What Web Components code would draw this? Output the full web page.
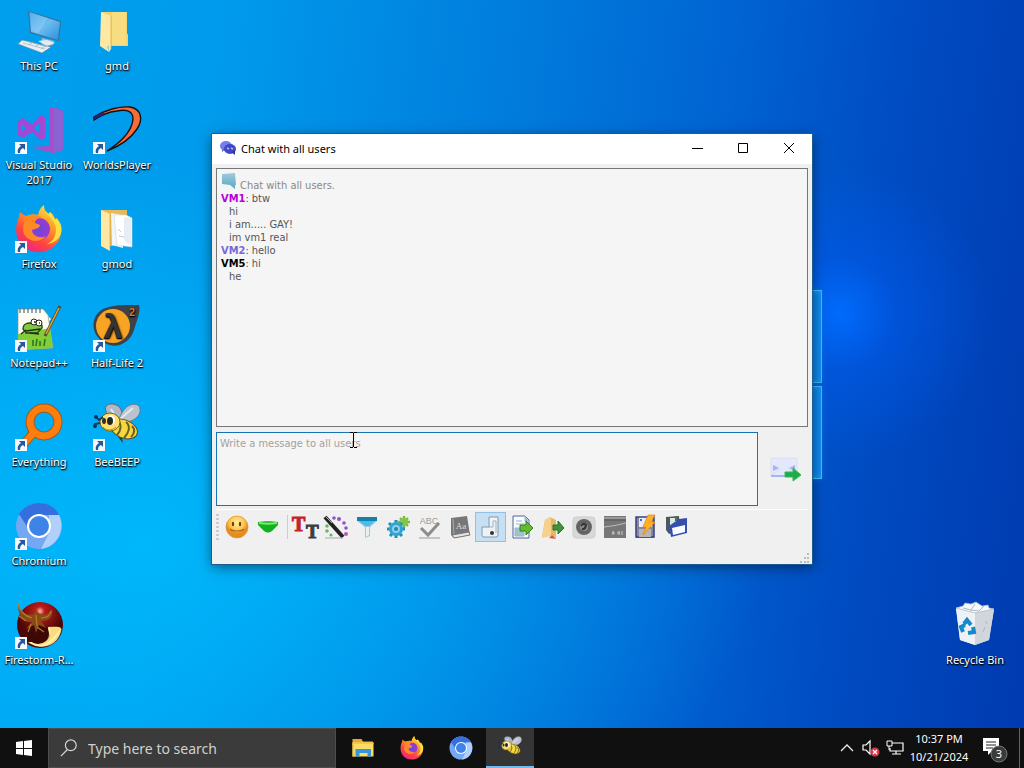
<!DOCTYPE html>
<html lang="en">
<head>
	<meta charset="utf-8">
	<title>Desktop</title>
	<meta name="viewport" content="width=device-width">
</head>
<style type="text/css">
html, body {
	height:100%;
}
body {
	margin:0;
	overflow:hidden;
	font-family:'Noto Sans', 'Open Sans', sans-serif;
	font-size:12px;
}
</style>
<body>

<desktop-screen>
	<desktop-icon icon="pc">This PC</desktop-icon>
	<desktop-icon icon="vs" shortcut>Visual Studio 2017</desktop-icon>
	<desktop-icon icon="firefox" shortcut>Firefox</desktop-icon>
	<desktop-icon icon="notepad" shortcut>Notepad++</desktop-icon>
	<desktop-icon icon="everything" shortcut>Everything</desktop-icon>
	<desktop-icon icon="chromium" shortcut>Chromium</desktop-icon>
	<desktop-icon icon="firestorm" shortcut>Firestorm-R...</desktop-icon>
	<desktop-icon icon="folder">gmd</desktop-icon>
	<desktop-icon icon="worlds" shortcut>WorldsPlayer</desktop-icon>
	<desktop-icon icon="folderfull">gmod</desktop-icon>
	<desktop-icon icon="halflife" shortcut>Half-Life 2</desktop-icon>
	<desktop-icon icon="bee" shortcut>BeeBEEP</desktop-icon>
	<desktop-icon slot="corner" icon="bin">Recycle Bin</desktop-icon>

	<app-window slot="window" icon="chat">
		<span slot="title">Chat with all users</span>
		<chat-log>
			<chat-line icon="bubble" muted>Chat with all users.</chat-line>
			<chat-line from="VM1" color="#b800d8">btw</chat-line>
			<chat-line indent>hi</chat-line>
			<chat-line indent>i am..... GAY!</chat-line>
			<chat-line indent>im vm1 real</chat-line>
			<chat-line from="VM2" color="#7b68d8">hello</chat-line>
			<chat-line from="VM5" color="#000">hi</chat-line>
			<chat-line indent>he</chat-line>
		</chat-log>
		<message-box placeholder="Write a message to all users"></message-box>
		<tool-bar>
			<tool-button icon="smile" name="Emoticons"></tool-button>
			<tool-button icon="down" name="More emoticons"></tool-button>
			<tool-separator></tool-separator>
			<tool-button icon="font" name="Font"></tool-button>
			<tool-button icon="wand" name="Font color"></tool-button>
			<tool-button icon="filter" name="Filter"></tool-button>
			<tool-button icon="gear" name="Options"></tool-button>
			<tool-button icon="spell" name="Spell check"></tool-button>
			<tool-button icon="dict" name="Dictionary"></tool-button>
			<tool-button icon="note" name="Sound" active></tool-button>
			<tool-button icon="file" name="Send file"></tool-button>
			<tool-button icon="folderout" name="Send folder"></tool-button>
			<tool-button icon="voice" name="Voice message"></tool-button>
			<tool-button icon="shot" name="Screenshot"></tool-button>
			<tool-button icon="buzz" name="Buzz"></tool-button>
			<tool-button icon="save" name="Save chat"></tool-button>
		</tool-bar>
	</app-window>

	<task-bar slot="taskbar">
		<task-button icon="explorer" name="File Explorer"></task-button>
		<task-button icon="firefox" name="Firefox"></task-button>
		<task-button icon="chromium" name="Chromium"></task-button>
		<task-button icon="bee" name="BeeBEEP" active></task-button>
	</task-bar>
</desktop-screen>

<script type="text/javascript">

	// every drawing, as [viewBox size, markup]
	const icons = {
		pc: [48, `<defs><linearGradient id="g" x1="0" y1="0" x2="1" y2="1"><stop offset="0" stop-color="#2f9be8"/><stop offset=".5" stop-color="#6cbcf0"/><stop offset="1" stop-color="#2b8fdd"/></linearGradient></defs>
			<path d="M27 31l12 3-1 4-8 1-4-3z" fill="#a9bac6"/><path d="M23 34l9-1 8 3-8 3z" fill="#e3ebf0"/>
			<path d="M13 4l33 10-2 20-29-8z" fill="#3a6d92"/><path d="M14 5l31 10-2 18-27-8z" fill="url(#g)"/><path d="M15 5l18 6-10 15-7-2z" fill="#fff" opacity=".18"/>
			<path d="M7 33l29 7-9 6-24-9z" fill="#e9eff3" stroke="#65859a" stroke-width=".6"/><path d="M8 36l22 6M11 34l21 6M14 38l4-3M20 40l4-3M26 42l4-3" stroke="#9cb0bd" fill="none" stroke-width=".7"/>`],
		folder: [48, `<path d="M8 5h26v21l1 2v11H15z" fill="#f4d26c"/><path d="M19 5h14v33H19z" fill="#f8dc80"/><path d="M8 5l10 4v33l-2 3-9-6z" fill="#ffe9a2"/><path d="M18 9v33" stroke="#d9ad42" stroke-width=".8"/><path d="M14 40l2 5v-7z" fill="#7fd3ee"/>`],
		folderfull: [48, `<path d="M8 5h26v36H15z" fill="#e6bb57"/><path d="M18 8l11 2 1 33-11-3z" fill="#f2f5f7"/><path d="M21 10h12l6 3v29l-15-2z" fill="#fff" stroke="#cdd5dc" stroke-width=".6"/><path d="M31 12l7 1v28l-7-6z" fill="#e7edf3"/><path d="M25 24l3 3m-2 4l5 1" stroke="#b9c9da"/><path d="M8 5l9 4v37l-9-5z" fill="#ffe8a5"/><path d="M17 9v36" stroke="#d4a33c" stroke-width=".7"/>`],
		vs: [48, `<path d="M35 2l4-1 9 4v39l-10 3-23-6 20-1z" fill="#a64fc8"/><path d="M39 1l9 4v39l-9 3z" fill="#8b62d3"/><path fill-rule="evenodd" d="M3 15l5-3 9 7 8-10 5 2v21l-5 2-8-8-9 6-5-3zM6 18v8l5-4zm18-1l-5 5 5 5z" fill="#a348d5"/>`],
		worlds: [48, `<path d="M1 11C12 4 26 0 37 1c12 2 13 13 7 22-6 9-17 17-30 22 14-9 22-17 25-27C43 5 34 3 24 5c-9 1-16 4-23 9z" fill="#f66d36" stroke="#150f18" stroke-width="1.4"/><path d="M1 12l10-5" stroke="#29206c" stroke-width="3"/>`],
		firefox: [48, `<defs><linearGradient id="g" x1=".8" y1="0" x2=".2" y2="1"><stop offset="0" stop-color="#ffee45"/><stop offset=".35" stop-color="#ff9b27"/><stop offset=".7" stop-color="#ff4146"/><stop offset="1" stop-color="#e9208c"/></linearGradient><radialGradient id="p"><stop offset="0" stop-color="#6b45dd"/><stop offset="1" stop-color="#9a3bd0"/></radialGradient></defs>
			<path d="M4 12l1-5c2 2 4 3 6 4 5-2 8-2 12-1 1-5 3-8 6-10 0 5 2 7 5 9l1-2c3 2 4 4 5 7l2-1c7 13 4 24-5 30-10 7-25 5-32-5C0 30 0 20 4 12z" fill="url(#g)"/>
			<path d="M27 2c4 8 14 12 14 23 0 7-4 12-9 14 16-2 18-18 10-25l-2 1-5-8-1 2c-3-2-6-4-7-7z" fill="#ffdf3e"/><circle cx="24" cy="24" r="11" fill="url(#p)"/><path d="M10 12c5-3 12-3 17 1-6 0-7 3-7 5l5 2c0 3-5 4-8 5 0 6 8 9 14 6-7 9-23 5-23-7z" fill="#ff8a25"/>`],
		notepad: [48, `<path d="M3 6h24l9 9-3 4 3 22-29 1z" fill="#fcfdf4"/><path d="M3 5h25l5 6 5 33-35 2z" fill="#fcfdf4" stroke="#8b9485" stroke-width=".7"/><path d="M3 30l32-6 3 20-35 2z" fill="#81ce38"/><path d="M5 4v5m4-5v5m4-5v5m4-5v5m4-5v5m4-5v5" stroke="#526f83" stroke-width="1.2"/>
			<path d="M8 25c0-6 6-7 10-5 4-5 10-1 9 4l-5 5H11z" fill="#82c941" stroke="#263b15" stroke-width="1.3"/><circle cx="19" cy="18" r="3" fill="#fff" stroke="#1f2915"/><circle cx="24" cy="19" r="3" fill="#fff" stroke="#1f2915"/><path d="M19 18h2m3 1h1M11 27l14-2M6 30l5-4m4 3l9 1" stroke="#1e3214" stroke-width="1.5"/><path d="M18 42v-6m3 6l1-7m3 7v-5m4 5l1-7" stroke="#2b7720" stroke-width="1.6"/><path d="M45 2l-15 30" stroke="#584936" stroke-width="3"/><path d="M44 4L31 30" stroke="#d9a93a" stroke-width="1.6"/>`],
		halflife: [48, `<path d="M10 5C20 0 35 1 46 1c2 6-2 15-5 25-4 13-18 20-29 13C-3 31-3 12 10 5z" fill="#3d4148"/><circle cx="20" cy="22" r="17" fill="#f7a323"/><text x="20" y="34" text-anchor="middle" font-family="Liberation Sans" font-weight="bold" font-size="34" fill="#343434">λ</text><text x="39" y="12" text-anchor="middle" font-family="Liberation Sans" font-size="10" font-weight="bold" fill="#e7752a">2</text>`],
		everything: [48, `<circle cx="29" cy="19" r="14" fill="none" stroke="#9a5b22" stroke-width="9"/><path d="M18 30L9 41" stroke="#9a5b22" stroke-width="9"/><circle cx="29" cy="19" r="14" fill="none" stroke="#ff7d0c" stroke-width="7"/><path d="M20 28L8 42" stroke="#ff7d0c" stroke-width="7"/>`],
		bee: [48, `<path d="M20 17C10 9 10 0 20 1c8 1 11 9 8 17z" fill="#aeb8c8" stroke="#616878"/><path d="M26 17C29 4 40-2 46 3c4 8-4 16-15 16z" fill="#bcc3d0" stroke="#727a88"/><path d="M18 6l6 10m3 0L40 5" stroke="#e3e9f2" stroke-width="2"/>
			<ellipse cx="31" cy="26" rx="14" ry="9" transform="rotate(22 31 26)" fill="#f6d740" stroke="#5b491e"/><path d="M25 18c4 3 3 10-1 14m9-13c5 4 3 11-2 16m8-12c4 4 2 8-1 11" fill="none" stroke="#6b5f1f" stroke-width="2"/><path d="M29 35l1 5-5-6z" fill="#463724"/>
			<ellipse cx="17" cy="19" rx="10" ry="9" fill="#ffe16a" stroke="#756320"/><path d="M10 24c3 4 9 4 13 0" fill="none" stroke="#b98c25"/><ellipse cx="18" cy="17" rx="4" ry="5" fill="#fff"/><ellipse cx="17" cy="18" rx="3" ry="4" fill="#252525"/><ellipse cx="11" cy="18" rx="2" ry="3" fill="#303030"/><path d="M10 14l-4 3-3-3m4 6l-5 1v4" stroke="#15355d" stroke-width="1.8" fill="none"/><circle cx="3" cy="14" r="2" fill="#15355d"/><circle cx="2" cy="23" r="2" fill="#15355d"/>`],
		chromium: [48, `<circle cx="24" cy="24" r="23" fill="#75a8f2"/><path d="M4 12C10 3 19 1 24 1c10 0 17 5 20 12H24L13 26z" fill="#356fde"/><path d="M44 13c7 15-2 32-18 34l8-16V13z" fill="#b1cffb"/><circle cx="24" cy="24" r="12" fill="#fff"/><circle cx="24" cy="24" r="10" fill="#3d83e8"/>`],
		firestorm: [48, `<defs><radialGradient id="g" cx=".5" cy=".2"><stop offset="0" stop-color="#ffc0a8"/><stop offset=".2" stop-color="#bd1b19"/><stop offset="1" stop-color="#4e0708"/></radialGradient></defs><circle cx="25" cy="24" r="23" fill="url(#g)"/><path d="M16 42c16 2 21-5 18-16 10-1 14 0 12 4-3 14-18 20-30 12z" fill="#f9dd7c"/><path d="M34 26c2 13-6 15-18 16 15 9 24-6 29-12" fill="none" stroke="#fff1ae" stroke-width="2"/><ellipse cx="23" cy="33" rx="11" ry="10" fill="#3d0805"/>
			<path d="M3 3c0 12 5 19 14 18l-6 7 8-4 2 8 3-8 7 3-5-7c10 0 12-6 11-12-4 7-10 6-14 4l-2-5-2 6C10 15 5 12 3 3z" fill="#8a4a16"/><path d="M3 3c2 8 7 12 14 14m4-3l1 11m4-8c6 0 9-2 10-7M4 15l7 5m5 3l-3 8m9-5l7 5" stroke="#b97a2c" fill="none" stroke-width="1.2"/>`],
		bin: [48, `<path d="M5 7l18-3 20 4-5 31-14 5-15-5z" fill="#dde4ea"/><path d="M5 7l19 5v32L9 39z" fill="#eff2f4"/><path d="M24 12l19-4-5 31-14 5z" fill="#d0d6db"/><path d="M5 7l7-2 2-3 6 1 5-2 6 4 6-1 1 3 5 1-19 4z" fill="#f7f8fa" stroke="#a7b5c2" stroke-width=".7"/><path d="M12 7l8 2 4-6m-5 6l9 1 5-5" fill="none" stroke="#a9bac7"/><path d="M13 23l3-4 4 5m2 2l1 5-6 1m-5-1l-2-5 4-2" fill="none" stroke="#1589cc" stroke-width="4"/><path d="M35 20l1 3m-2 3l-2 5" stroke="#afbac4"/>`],
		chat: [16, `<ellipse cx="6" cy="6" rx="6" ry="5" fill="#7480ea"/><path d="M2 8v4l4-3" fill="#6973d8"/><ellipse cx="10" cy="9" rx="6" ry="5" fill="#4047c7"/><path d="M11 12l4 3v-5" fill="#3035aa"/><path d="M7 8l2 1m2-1l2 1" stroke="#aebaff" stroke-width="1.5"/>`],
		bubble: [16, `<defs><linearGradient id="g" x2="0" y2="1"><stop stop-color="#9fcbda"/><stop offset="1" stop-color="#58a7c3"/></linearGradient></defs><path d="M1 1l13-1 1 12h-1v4l-5-4-8-1z" fill="url(#g)"/>`],
		smile: [24, `<defs><radialGradient id="g" cy=".3"><stop offset="0" stop-color="#fff29e"/><stop offset=".7" stop-color="#ffc147"/><stop offset="1" stop-color="#e78b20"/></radialGradient></defs><circle cx="12" cy="12" r="11" fill="url(#g)" stroke="#d89433" stroke-width=".7"/><ellipse cx="8" cy="9" rx="1.2" ry="2.3" fill="#6d3e16"/><ellipse cx="15" cy="9" rx="1.2" ry="2.3" fill="#6d3e16"/><path d="M5 14q2 2 7 2t7-2" stroke="#a8682a" fill="none" stroke-width="1.2"/>`],
		down: [24, `<path d="M2 7c6-1 14-1 20 0v3l-6 6q-4 3-8 0l-6-6z" fill="#10b020"/><path d="M3 8c6 1 12 1 18 0" stroke="#75ec68" stroke-width="2" fill="none"/>`],
		font: [24, `<text x="-1" y="16" font-family="Liberation Serif" font-weight="bold" font-size="20" fill="#c4222c" stroke="#c4222c">T</text><text x="13" y="23" font-family="Liberation Serif" font-weight="bold" font-size="19" fill="#3d3d40" stroke="#3d3d40">T</text>`],
		wand: [24, `<path d="M1 2l18 20" stroke="#222" stroke-width="4"/><path d="M2 2l6 6" stroke="#aaa"/><path d="M1 23h18" stroke="#aaa"/><g fill="#8855cc"><circle cx="10" cy="3" r="1.8"/><circle cx="15" cy="4" r="2"/><circle cx="20" cy="8" r="1.800"/><circle cx="22" cy="13" r="1.800"/><circle cx="22" cy="19" r="2" fill="#bf55b5"/></g><g fill="#69b36b"><circle cx="3" cy="11" r="1.8"/><circle cx="3" cy="16" r="1.800"/><circle cx="7" cy="20" r="1.600"/></g>`],
		filter: [24, `<path d="M2 2h20v4l-7 6v9l-5 2V12L2 6z" fill="#9bc9de"/><path d="M2 2h20v4H2z" fill="#157fae"/><path d="M4 6h16l-6 5h-4z" fill="#48bde5"/><path d="M11 12h3v8l-3 2z" fill="#e7f1f4"/>`],
		gear: [24, `<path d="M18 1v12M12 7h12M14 3l8 8M22 3l-8 8" stroke="#77b83c" stroke-width="2.400"/><circle cx="18" cy="7" r="4" fill="#84c64b"/><path d="M10 5v18M1 14h18M3 8l13 13M16 8L4 21" stroke="#238dbb" stroke-width="3"/><circle cx="10" cy="14" r="7" fill="#31a4d1"/><circle cx="10" cy="14" r="4" fill="#8fd0e8"/><circle cx="10" cy="14" r="2" fill="#2585ae"/>`],
		spell: [24, `<text x="12" y="9" text-anchor="middle" font-family="Liberation Sans" font-size="9" fill="#999">ABC</text><path d="M4 13l7 7 11-12" fill="none" stroke="#8c8c8c" stroke-width="3"/><path d="M2 23h21" stroke="#999"/>`],
		dict: [24, `<path d="M3 3l16-2 3 19-16 3-3-3z" fill="#777"/><path d="M4 20l17-3 1 3-16 3z" fill="#e4e4e4" stroke="#777"/><path d="M5 4l1 15" stroke="#aaa"/><text x="13" y="14" text-anchor="middle" font-family="Liberation Serif" font-size="9" fill="#ddd">Aa</text>`],
		note: [24, `<path d="M10 2h9v18q0 2-2 2H5q-2 0-2-2v-8h7z" fill="#edf2f6" stroke="#8398ae"/><path d="M9 12h5V6h3v12" fill="none" stroke="#a1afbc"/><ellipse cx="13" cy="18" rx="2" ry="2" fill="#333"/>`],
		file: [24, `<path d="M3 1h12l4 4v18H3z" fill="#f8fbff" stroke="#51659a"/><path d="M15 1v5h4M6 6h6M6 9h9M5 13h9v8H5z" fill="#9fc3cd" stroke="#9bb5ce"/><path d="M10 10h6V6l7 7-7 7v-4h-6z" fill="#65bb2b" stroke="#317f25"/>`],
		folderout: [24, `<path d="M1 22l3-17 5-3 6 3v18l-6-3z" fill="#e6b766"/><path d="M4 5l6-3v19l-9 2z" fill="#f5d18d"/><path d="M12 10h5V6l6 7-6 6v-4h-5z" fill="#3d9534" stroke="#2b7229"/><path d="M8 23l3-3 4 4" fill="#cb5c44"/>`],
		voice: [24, `<rect x="1" y="2" width="22" height="21" rx="3" fill="#d8d8d8" stroke="#ccc"/><circle cx="12" cy="12" r="8" fill="#666"/><circle cx="12" cy="12" r="5" fill="#888" stroke="#555"/><path d="M9 11q3-4 5-1-1 5-4 4" fill="none" stroke="#333" stroke-width="2"/>`],
		shot: [24, `<path d="M1 1h22v22H1z" fill="#777"/><path d="M1 3h22M1 12q11-1 22-4" stroke="#bbb" fill="none"/><path d="M1 5h22" stroke="#555"/><path d="M9 18h3m2 0h3m2-2v4m-9-4v4m6-4v4" stroke="#ccc"/>`],
		buzz: [24, `<path d="M2 2h18v21H2z" fill="#8a8796"/><path d="M5 2h13v10H5z" fill="#e9edfb"/><path d="M2 2h18v20H2z" fill="none" stroke="#36408c" stroke-width="1.5"/><path d="M5 14h12v8H5z" fill="#b9b3b3"/><path d="M14 0h7l-4 7h4L9 20l3-8H9z" fill="#ffb323" stroke="#eb7c18" stroke-width=".7"/><path d="M6 4h2v2H6z" fill="#4a66ce"/>`],
		save: [24, `<path d="M1 2l13-1 1 14-11 4-3-4z" fill="#4d5666"/><path d="M5 3h7v7H5z" fill="#dce9dc"/><path d="M10 1h2v5h-2z" fill="#527153"/><path d="M14 4l8-1v15L6 22 4 11z" fill="#354daf"/><path d="M7 13l13-3v7L8 20z" fill="#f8fbff"/>`],
		send: [32, `<path d="M2 5h26v18H2z" fill="#e3e8fb" stroke="#d8def8"/><path d="M2 23l9-8m17 8l-9-8" fill="none" stroke="#d3daf6"/><path d="M4 12l6 3-6 3zm22 0l-6 3 6 3zM2 22h14v2H2z" fill="#a7b2ee"/><path d="M16 19h8v-4l8 7-8 6v-4h-8z" fill="#24a84a" stroke="#2fbe53"/>`],
		explorer: [48, `<path d="M3 6h18l3 5h20v8H3z" fill="#e7a92e"/><path d="M3 13h42v28H3z" fill="#ffda65"/><path d="M9 26h31v15h-7v-7H17v7H9z" fill="#3498d8"/><path d="M6 36h3v5H3V13h42v3H6z" fill="#f4c84b"/>`],
		start: [16, `<path d="M0 2l7-1v7H0zm8-1l8-1v8H8zM0 9h7v6l-7-1zm8 0h8v7l-8-1z" fill="#fff"/>`],
		search: [20, `<circle cx="12" cy="7" r="6" fill="none" stroke="#d5d5d5" stroke-width="1.3"/><path d="M8 12l-7 7" stroke="#d5d5d5" stroke-width="1.4"/>`],
		up: [16, `<path d="M2 11l6-6 6 6" fill="none" stroke="#eee" stroke-width="1.3"/>`],
		sound: [18, `<path d="M1 6h3l4-4v13l-4-4H1z" fill="none" stroke="#fff" stroke-width="1.2"/><circle cx="13" cy="13" r="4.500" fill="#d83545"/><path d="M11 11l4 4m0-4l-4 4" stroke="#fff" stroke-width="1.3"/>`],
		network: [18, `<path d="M6 4h11v8H4V9M10 12v3m-4 0h9" fill="none" stroke="#fff" stroke-width="1.2"/><path d="M1 2h5v5H1zm2 5v4" fill="#111" stroke="#fff"/>`],
		notice: [24, `<path d="M0 2h16v13H9l-4 4v-4H0z" fill="#fff"/><path d="M3 6h10M3 9h10M3 12h7" stroke="#222"/><circle cx="16" cy="18" r="8" fill="#3b3b3b" stroke="#777"/><text x="16" y="22" text-anchor="middle" font-family="Noto Sans" font-size="11" fill="#fff">3</text>`]
	}

	function draw(name) {
		let icon = icons[name]
		return "<svg viewBox='0 0 " + icon[0] + " " + icon[0] + "' aria-hidden='true'>" + icon[1] + "</svg>"
	}

	customElements.define('line-art', class extends HTMLElement {
	constructor() {
		super();
		this.attachShadow({mode:'open'}).innerHTML=`
		<style>
		:host {
			display:block;
			flex:none;
			width:24px;
			height:24px;
		}
		svg {
			display:block;
			width:100%;
			height:100%;
			overflow:visible;
		}
		</style>
		${draw(this.getAttribute('name'))}
		`
		}
	})

	customElements.define('desktop-screen', class extends HTMLElement {
	constructor() {
		super();
		this.attachShadow({mode:'open'}).innerHTML=`
		<style>
		:host {
			display:grid;
			grid-template-rows:1fr auto;
			height:100vh;
		}
		main {
			position:relative;
			display:flex;
			justify-content:space-between;
			overflow:hidden;
			background:
				radial-gradient(circle at 82% 43%, rgba(0,108,255,0.95) 0, rgba(0,92,240,0.5) 6%, rgba(0,80,220,0) 16%),
				radial-gradient(ellipse at 14% 75%, rgba(0,190,255,0.8) 0, rgba(0,180,255,0) 50%),
				linear-gradient(97deg, #009fee 0, #009bec 20%, #007bdc 48%, #0064d2 66%, #004cc2 82%, #003ab0 100%);
		}
		.icons {
			display:grid;
			grid-template-rows:repeat(7, 99px);
			grid-auto-columns:78px;
			grid-auto-flow:column;
		}
		.corner {
			margin-right:10px;
			align-content:start;
		}
		.corner ::slotted(*) {
			grid-row:7;
		}
		/* lit panes of the wallpaper logo */
		.pane {
			position:absolute;
			left:630px;
			top:290px;
			width:192px;
			height:189px;
			display:grid;
			grid-template-rows:1fr 1fr;
			gap:3px;
		}
		.pane i {
			background:#0b80e6;
			border:1px solid #3fc0f5;
			box-shadow:inset 0 0 6px #19a5f2, 0 0 6px #0f6fe8;
		}
		</style>
		<main>
			<div class="pane"><i></i><i></i></div>
			<div class="icons"><slot></slot></div>
			<div class="icons corner"><slot name="corner"></slot></div>
			<slot name="window"></slot>
		</main>
		<slot name="taskbar"></slot>
		`
		}
	})

	customElements.define('desktop-icon', class extends HTMLElement {
	constructor() {
		super();
		this.attachShadow({mode:'open'}).innerHTML=`
		<style>
		:host {
			position:relative;
			display:block;
		}
		button {
			display:flex;
			flex-direction:column;
			align-items:center;
			gap:3px;
			width:100%;
			padding:7px 0 0;
			border:0;
			background:none;
			color:#fff;
			font:inherit;
			font-size:11px;
			line-height:15px;
			text-shadow:0 1px 1px #000, 1px 1px 2px #000;
		}
		.picture {
			position:relative;
		}
		line-art {
			width:48px;
			height:48px;
		}
		.arrow {
			position:absolute;
			left:0;
			bottom:0;
			display:none;
			width:12px;
			height:12px;
		}
		:host([shortcut]) .arrow {
			display:block;
		}
		</style>
		<button>
			<span class="picture">
				<line-art name="${this.getAttribute('icon')}"></line-art>
				<svg class="arrow" viewBox="0 0 12 12" aria-hidden="true"><path d="M0 0h12v12H0z" fill="#f5f9fc"/><path d="M4 2h6v6L8 6c-2 1-3 2-3 5H3C2 8 3 6 6 4z" fill="#27599a"/></svg>
			</span>
			<span><slot></slot></span>
		</button>
		`
		}
	})

	customElements.define('app-window', class extends HTMLElement {
	constructor() {
		super();
		this.attachShadow({mode:'open'}).innerHTML=`
		<style>
		:host {
			position:absolute;
			left:212px;
			top:134px;
			display:flex;
			flex-direction:column;
			width:600px;
			height:430px;
			background:#f0f0f0;
			outline:1px solid #1b5c93;
			box-shadow:0 3px 12px rgba(0,0,0,0.5);
		}
		header {
			display:flex;
			align-items:center;
			height:28px;
			padding:0 0 2px 8px;
			background:#fff;
		}
		line-art {
			width:16px;
			height:16px;
		}
		h1 {
			flex:1;
			margin:0 0 0 5px;
			font-size:11px;
			font-weight:normal;
		}
		button {
			display:grid;
			place-items:center;
			width:46px;
			height:28px;
			padding:0;
			border:0;
			background:none;
		}
		button svg {
			width:12px;
			height:12px;
			fill:none;
			stroke:#000;
		}
		section {
			flex:1;
			display:flex;
			flex-direction:column;
			min-height:0;
			padding:4px 4px 0;
		}
		.grip {
			align-self:flex-end;
			width:10px;
			height:10px;
			margin:0 2px 1px 0;
		}
		</style>
		<header>
			<line-art name="${this.getAttribute('icon')}"></line-art>
			<h1><slot name="title"></slot></h1>
			<button aria-label="Minimize"><svg viewBox="0 0 12 12"><path d="M1 6.5h11"/></svg></button>
			<button aria-label="Maximize"><svg viewBox="0 0 12 12"><path d="M1.5 1.5h9v9h-9z"/></svg></button>
			<button aria-label="Close"><svg viewBox="0 0 12 12"><path d="M1 1l10 10M11 1L1 11"/></svg></button>
		</header>
		<section><slot></slot></section>
		<svg class="grip" viewBox="0 0 10 10"><path d="M7 0h2v2H7zM4 4h2v2H4zM7 4h2v2H7zM0 8h2v2H0zM4 8h2v2H4zM7 8h2v2H7z" fill="#bbb"/></svg>
		`
		}
	})

	customElements.define('chat-log', class extends HTMLElement {
	constructor() {
		super();
		this.attachShadow({mode:'open'}).innerHTML=`
		<style>
		:host {
			flex:1;
			display:block;
			padding:4px;
			border:1px solid #777;
			background:#f5f5f5;
			color:#555;
			font-family:'DejaVu Sans Condensed', 'Noto Sans', sans-serif;
			font-size:11px;
			line-height:13px;
		}
		</style>
		<slot></slot>
		`
		}
	})

	customElements.define('chat-line', class extends HTMLElement {
	constructor() {
		super();
		let icon = this.getAttribute('icon')
		let from = this.getAttribute('from')
		this.attachShadow({mode:'open'}).innerHTML=`
		<style>
		:host {
			display:flex;
			gap:3px;
		}
		:host([indent]) {
			padding-left:8px;
		}
		:host([muted]) {
			align-items:flex-end;
			color:#888;
		}
		line-art {
			width:16px;
			height:16px;
			margin-bottom:3px;
		}
		b {
			color:${this.getAttribute('color')};
		}
		</style>
		${icon ? "<line-art name='" + icon + "'></line-art>" : ""}
		${from ? "<span><b>" + from + "</b>:</span>" : ""}
		<span><slot></slot></span>
		`
		}
	})

	customElements.define('message-box', class extends HTMLElement {
	constructor() {
		super();
		this.attachShadow({mode:'open'}).innerHTML=`
		<style>
		:host {
			position:relative;
			display:flex;
			height:74px;
			margin:5px 0 3px;
		}
		textarea {
			flex:1;
			box-sizing:border-box;
			padding:4px 3px;
			border:1px solid #1673b5;
			outline:0;
			background:#f5f5f5;
			resize:none;
			font-family:'DejaVu Sans Condensed', 'Noto Sans', sans-serif;
			font-size:11px;
			line-height:14px;
		}
		textarea::placeholder {
			color:#a5a09c;
		}
		button {
			display:grid;
			place-items:center;
			width:50px;
			padding:0 0 0 4px;
			border:0;
			background:none;
		}
		line-art {
			width:32px;
			height:32px;
		}
		.pointer {
			position:absolute;
			left:133px;
			top:0;
			width:9px;
			height:16px;
		}
		</style>
		<textarea aria-label="Message" placeholder="${this.getAttribute('placeholder')}"></textarea>
		<button aria-label="Send"><line-art name="send"></line-art></button>
		<svg class="pointer" viewBox="0 0 9 16"><path d="M1 .5h3m1 0h3M4.500 1v14M1 15.500h3m1 0h3" stroke="#000" fill="none"/></svg>
		`
		}
	})

	customElements.define('tool-bar', class extends HTMLElement {
	constructor() {
		super();
		this.attachShadow({mode:'open'}).innerHTML=`
		<style>
		:host {
			display:flex;
			align-items:center;
			height:30px;
			margin-bottom:11px;
			padding-top:2px;
			border-top:1px solid #fff;
		}
		.handle {
			align-self:stretch;
			width:3px;
			margin:2px 2px 2px 0;
			background:repeating-linear-gradient(#ccc 0 2px, transparent 2px 4px);
		}
		</style>
		<span class="handle"></span>
		<slot></slot>
		`
		}
	})

	customElements.define('tool-button', class extends HTMLElement {
	constructor() {
		super();
		this.attachShadow({mode:'open'}).innerHTML=`
		<style>
		:host {
			display:block;
			width:31px;
			height:30px;
		}
		button {
			display:grid;
			place-items:center;
			box-sizing:border-box;
			width:100%;
			height:100%;
			padding:0;
			border:1px solid transparent;
			background:none;
		}
		:host([active]) button {
			border-color:#92bfe3;
			background:#c7dff3;
		}
		</style>
		<button aria-label="${this.getAttribute('name')}"><line-art name="${this.getAttribute('icon')}"></line-art></button>
		`
		}
	})

	customElements.define('tool-separator', class extends HTMLElement {
	constructor() {
		super();
		this.attachShadow({mode:'open'}).innerHTML=`
		<style>
		:host {
			display:block;
			width:1px;
			height:24px;
			margin:0 1px 0 4px;
			background:#ccc;
		}
		</style>
		`
		}
	})

	customElements.define('task-bar', class extends HTMLElement {
	constructor() {
		super();
		this.attachShadow({mode:'open'}).innerHTML=`
		<style>
		:host {
			display:flex;
			height:40px;
			background:#101010;
			color:#fff;
		}
		button {
			display:grid;
			place-items:center;
			padding:0;
			border:0;
			background:none;
			color:inherit;
			font:inherit;
		}
		.start {
			width:48px;
		}
		.start line-art, .up line-art {
			width:16px;
			height:16px;
		}
		label {
			display:flex;
			align-items:center;
			gap:10px;
			box-sizing:border-box;
			width:288px;
			padding-left:11px;
			border:1px solid #4d4d4d;
			background:#3b3b3b;
		}
		label line-art {
			width:18px;
			height:18px;
		}
		input {
			flex:1;
			min-width:0;
			padding:0;
			border:0;
			outline:0;
			background:none;
			color:#fff;
			font:inherit;
			font-size:14px;
		}
		input::placeholder {
			color:#d0d0d0;
		}
		.apps {
			flex:1;
			display:flex;
			gap:1px;
			padding-left:3px;
		}
		.tray {
			display:flex;
		}
		.tray button {
			width:24px;
		}
		.tray button line-art {
			width:18px;
			height:18px;
		}
		.tray .up line-art {
			width:16px;
			height:16px;
		}
		.tray .clock {
			width:64px;
			font-size:11px;
			line-height:18px;
			align-content:center;
		}
		.tray .notice {
			width:48px;
		}
		.tray .notice line-art {
			width:24px;
			height:24px;
		}
		.tray .peek {
			width:5px;
			border-left:1px solid #666;
		}
		</style>
		<button class="start" aria-label="Start"><line-art name="start"></line-art></button>
		<label><line-art name="search"></line-art><input type="text" aria-label="Search" placeholder="Type here to search"></label>
		<div class="apps"><slot></slot></div>
		<div class="tray">
			<button class="up" aria-label="Show hidden icons"><line-art name="up"></line-art></button>
			<button aria-label="Volume"><line-art name="sound"></line-art></button>
			<button aria-label="Network"><line-art name="network"></line-art></button>
			<button class="clock"><span>10:37 PM</span><span>10/21/2024</span></button>
			<button class="notice" aria-label="Notifications"><line-art name="notice"></line-art></button>
			<button class="peek" aria-label="Show desktop"></button>
		</div>
		`
		}
	})

	customElements.define('task-button', class extends HTMLElement {
	constructor() {
		super();
		this.attachShadow({mode:'open'}).innerHTML=`
		<style>
		:host {
			display:block;
			width:48px;
		}
		button {
			display:grid;
			place-items:center;
			box-sizing:border-box;
			width:100%;
			height:100%;
			padding:2px 0 0;
			border:0;
			border-bottom:2px solid transparent;
			background:none;
		}
		:host([active]) button {
			border-color:#76b9ed;
			background:#353535;
		}
		</style>
		<button aria-label="${this.getAttribute('name')}"><line-art name="${this.getAttribute('icon')}"></line-art></button>
		`
		}
	})

</script>
</body>
</html>
